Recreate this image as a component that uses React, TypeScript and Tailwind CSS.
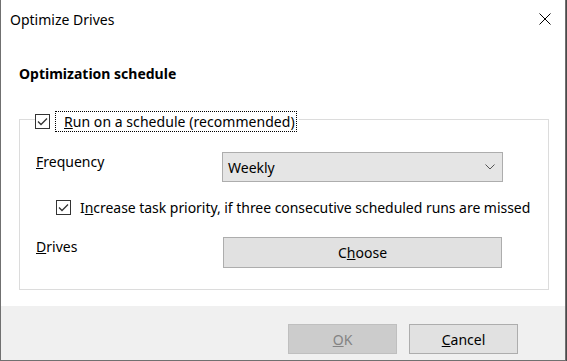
import React from "react";

const font = { fontFamily: '"Noto Sans", "Open Sans", sans-serif' };

function Check({ className = "" }: { className?: string }) {
  return (
    <div className={"w-[15px] h-[15px] shrink-0 border border-[#333] bg-white flex items-center justify-center " + className}>
      <svg width="13" height="13" viewBox="0 0 13 13">
        <path d="M2 6.5 L5 9.5 L11 3.5" fill="none" stroke="#333" strokeWidth="1.3" />
      </svg>
    </div>
  );
}

export default function App() {
  return (
    <div className="w-[567px] h-[361px] bg-[#4a4a4a] text-[14px] leading-[19px] text-black" style={font}>
      <div className="w-[566px] h-[361px] bg-white border-l border-r border-b border-[#707070] flex flex-col">
        {/* Title bar */}
        <div className="h-[38px] shrink-0 flex items-center justify-between pl-[9px] pr-[14px]">
          <span>Optimize Drives</span>
          <svg width="12" height="12" viewBox="0 0 12 12">
            <path d="M0.5 0.5 L11.5 11.5 M11.5 0.5 L0.5 11.5" stroke="#000" strokeWidth="1" />
          </svg>
        </div>
        {/* Body */}
        <div className="flex-1 flex flex-col pl-[18px]">
          <div className="mt-[26px] font-bold">Optimization schedule</div>
          <div className="relative mt-[36px] w-[530px] h-[171px] border border-[#dcdcdc]">
            <div className="absolute left-[15px] top-[-9px] flex items-center bg-white pr-[2px]">
              <Check />
              <span className="ml-[5px] h-[21px] border border-dotted border-black pl-[8px] pr-[1px] flex items-center"><span className="tracking-[0.05px]"><u>R</u>un on a schedule (recommended)</span></span>
            </div>
            <div className="mt-[32px] pl-[16px] flex flex-col">
              <div className="flex items-start">
                <span className="w-[186px]"><u>F</u>requency</span>
                <div className="w-[281px] h-[30px] bg-[#e5e5e5] border border-[#adadad] flex items-center justify-between pl-[5px] pr-[7px]">
                  <span>Weekly</span>
                  <svg width="10" height="6" viewBox="0 0 10 6">
                    <path d="M0.5 0.5 L5 5 L9.5 0.5" fill="none" stroke="#555" strokeWidth="1" />
                  </svg>
                </div>
              </div>
              <div className="flex items-center mt-[16px] pl-[20px]">
                <Check />
                <span className="ml-[9px] whitespace-nowrap tracking-[-0.04px]">I<u>n</u>crease task priority, if three consecutive scheduled runs are missed</span>
              </div>
              <div className="flex items-start mt-[20px]">
                <span className="w-[187px]"><u>D</u>rives</span>
                <div className="w-[279px] h-[31px] bg-[#e1e1e1] border border-[#adadad] flex items-center justify-center">
                  <span>C<u>h</u>oose</span>
                </div>
              </div>
            </div>
          </div>
        </div>
        {/* Footer */}
        <div className="h-[54px] shrink-0 bg-[#f0f0f0] flex items-start justify-end gap-[12px] pr-[47px] pt-[18px]">
          <div className="w-[109px] h-[30px] bg-[#cccccc] border border-[#bfbfbf] flex items-center justify-center text-[#838383]">
            <span><u>O</u>K</span>
          </div>
          <div className="w-[109px] h-[30px] bg-[#e1e1e1] border border-[#adadad] flex items-center justify-center">
            <span><u>C</u>ancel</span>
          </div>
        </div>
      </div>
    </div>
  );
}
